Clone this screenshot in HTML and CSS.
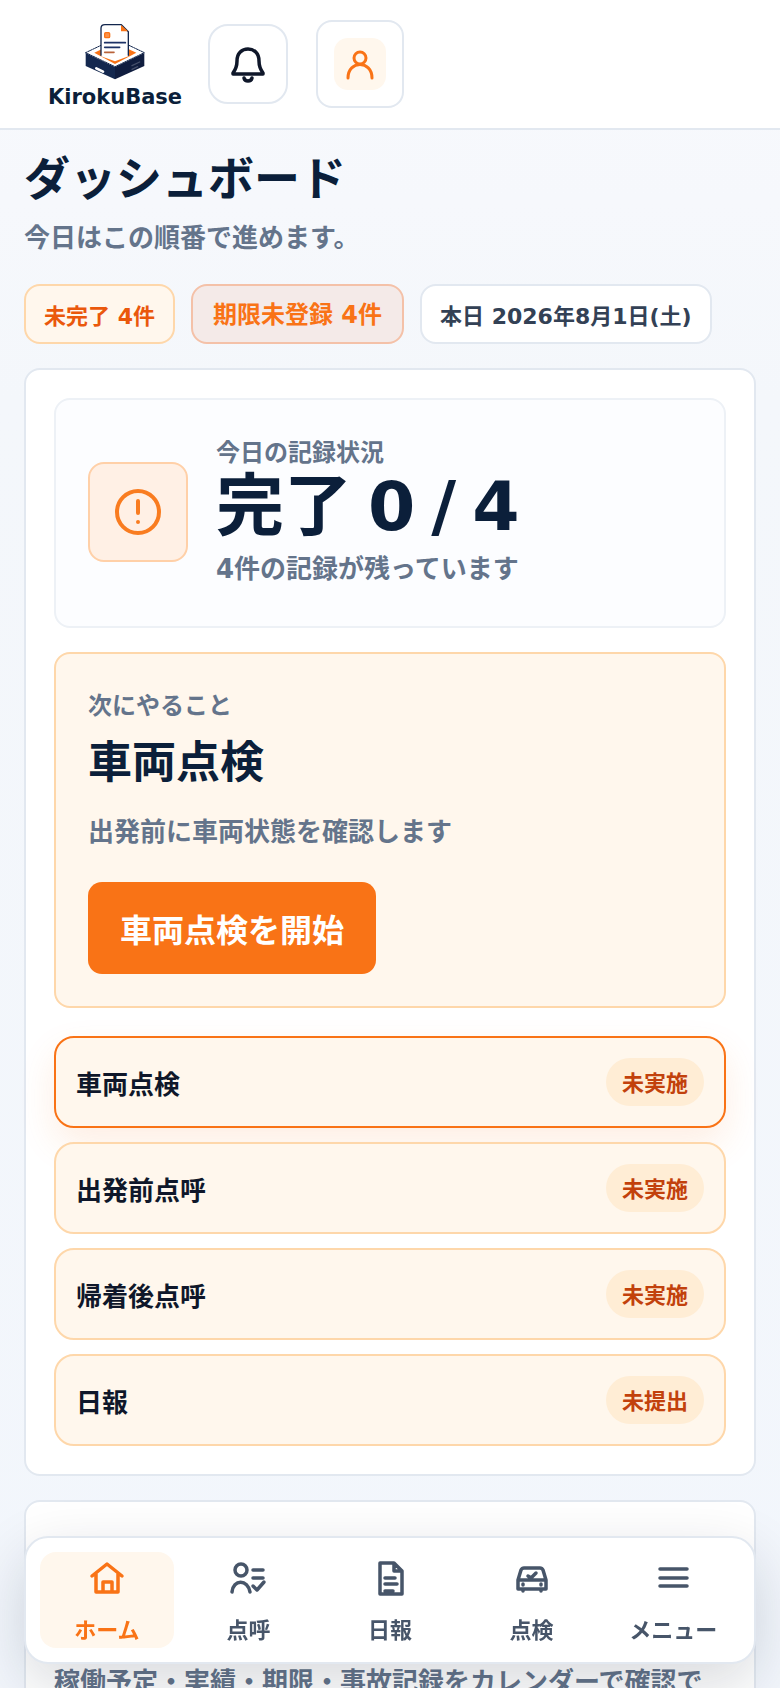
FILE: index.html
```
<!DOCTYPE html>
<html lang="ja">

<head>
    <meta charset="utf-8">
    <meta name="viewport" content="width=device-width, initial-scale=1.0">
    <title>KirokuBase</title>
    <link rel="stylesheet" href="styles.css">
</head>

<body>

<header class="topbar">
    <a class="brand" href="#">
        <svg class="brand-logo" viewBox="0 0 180 172" aria-hidden="true">
            <path d="M2 88 90 46 178 88 90 130Z" fill="#fff" stroke="#12264d" stroke-width="3" stroke-dasharray="5 3"/>
            <path d="M28 88 90 58 154 88 90 122Z" fill="#f97316"/>
            <path d="M2 89 90 131V168L2 128Z" fill="#14284f"/>
            <path d="M178 89 90 131V168L178 128Z" fill="#101d3f"/>
            <path d="M48 99V15Q48 4 60 4H109L130 25V99L90 114Z" fill="#fff"/>
            <path d="M48 96V15Q48 4 60 4H109L130 25V96" fill="none" stroke="#12264d" stroke-width="4"/>
            <path d="M108 5 129 24H108Z" fill="#f97316"/>
            <rect x="59" y="28" width="15" height="15" rx="3" fill="#fb9148" stroke="#f97316" stroke-width="4"/>
            <path d="M59 58H121M59 72H104" stroke="#1d3266" stroke-width="5" stroke-linecap="round"/>
            <path d="M59 87H87" stroke="#b9633a" stroke-width="5" stroke-linecap="round"/>
            <path d="M34 135 54 145" stroke="#fff" stroke-width="8" stroke-linecap="round"/>
            <path d="M141 127 164 116M141 138 158 130" stroke="#46506b" stroke-width="4" stroke-linecap="round"/>
        </svg>
        <span>KirokuBase</span>
    </a>
    <button class="bell" type="button" aria-label="通知">
        <svg viewBox="0 0 40 40" aria-hidden="true">
            <path d="M5 29C8 25 9 22 9 17C9 9 14 5 20 5S31 9 31 17C31 22 32 25 35 29V30H5Z"/>
            <path d="M16 34C17 38 23 38 24 34"/>
        </svg>
    </button>
    <button class="profile" type="button" aria-label="アカウント">
        <span class="avatar">
            <svg viewBox="0 0 40 40" aria-hidden="true">
                <circle cx="20" cy="14" r="6"/>
                <path d="M8 34C8 16 32 16 32 34"/>
            </svg>
        </span>
    </button>
</header>

<main>
    <h1>ダッシュボード</h1>
    <p class="lead">今日はこの順番で進めます。</p>

    <div class="chips">
        <span class="chip chip-todo">未完了 4件</span>
        <a class="chip chip-limit" href="#">期限未登録 4件</a>
        <span class="chip">本日 2026年8月1日(土)</span>
    </div>

    <section class="card">
        <div class="status">
            <div class="status-icon">
                <svg viewBox="0 0 52 52" aria-hidden="true">
                    <circle cx="26" cy="26" r="21"/>
                    <path d="M26 15V27M26 36V36"/>
                </svg>
            </div>
            <div>
                <p class="label">今日の記録状況</p>
                <p class="count"><span>完了</span> <span>0</span> <span>/</span> <span>4</span></p>
                <p class="note">4件の記録が残っています</p>
            </div>
        </div>

        <div class="next">
            <p class="label">次にやること</p>
            <h2>車両点検</h2>
            <p class="note">出発前に車両状態を確認します</p>
            <button class="start" type="button">車両点検を開始</button>
        </div>

        <ul class="tasks">
            <li><a class="task current" href="#">車両点検<span class="state">未実施</span></a></li>
            <li><a class="task" href="#">出発前点呼<span class="state">未実施</span></a></li>
            <li><a class="task" href="#">帰着後点呼<span class="state">未実施</span></a></li>
            <li><a class="task" href="#">日報<span class="state">未提出</span></a></li>
        </ul>
    </section>

    <section class="card calendar">
        <p class="note">稼働予定・実績・期限・事故記録をカレンダーで確認で</p>
    </section>
</main>

<nav class="tabs">
    <a class="tab active" href="#">
        <svg viewBox="0 0 40 40" aria-hidden="true">
            <path d="M5 18 20 6 35 18M9 16V34H31V16M16 34V24H25V34"/>
        </svg>
        ホーム
    </a>
    <a class="tab" href="#">
        <svg viewBox="0 0 40 40" aria-hidden="true">
            <circle cx="13" cy="12" r="6"/>
            <path d="M4 34C5 21 20 21 22 34M25 12H35M25 20H35M25 28 29 32 36 24"/>
        </svg>
        点呼
    </a>
    <a class="tab" href="#">
        <svg viewBox="0 0 40 40" aria-hidden="true">
            <path d="M10 5H24L32 13V36H10ZM24 5V13H32M15 20H25M15 26H27M15 33H23"/>
        </svg>
        日報
    </a>
    <a class="tab" href="#">
        <svg viewBox="0 0 40 40" aria-hidden="true">
            <path d="M6 22 9 12Q10 10 12 10H28Q30 10 31 12L34 22V31H6ZM6 22H34M11 31V33M29 31V33M11 26V27M29 26V27M16 18 19 20 24 15"/>
        </svg>
        点検
    </a>
    <a class="tab" href="#">
        <svg viewBox="0 0 40 40" aria-hidden="true">
            <path d="M7 11H34M7 20H34M7 28H34"/>
        </svg>
        メニュー
    </a>
</nav>

</body>

</html>
```
FILE: styles.css
```
* {
    box-sizing: border-box;
}

body {
    margin: 0;
    min-height: 100vh;
    font-family: "DejaVu Sans", "Noto Sans CJK JP", sans-serif;
    font-weight: bold;
    color: #0b1f3a;
    background: linear-gradient(180deg, #f8f9fd 0, #f4f7fb 400px, #f2f6fc 100%);
}

h1, h2, p, ul {
    margin: 0;
    padding: 0;
}

a {
    color: inherit;
    text-decoration: none;
}

button {
    font: inherit;
    padding: 0;
    cursor: pointer;
}

svg {
    display: block;
    fill: none;
    stroke-linecap: round;
    stroke-linejoin: round;
}

/* header */

.topbar {
    display: flex;
    align-items: center;
    gap: 26px;
    height: 130px;
    padding: 0 48px;
    background: #fff;
    border-bottom: 2px solid #e2e8f0;
}

.brand {
    display: flex;
    flex-direction: column;
    align-items: center;
    gap: 4px;
    padding-top: 4px;
    font-size: 21px;
    line-height: 24px;
}

.brand-logo {
    width: 60px;
    height: 58px;
}

.bell, .profile {
    display: grid;
    place-items: center;
    background: #fff;
    border: 2px solid #e2e8f0;
}

.bell {
    width: 80px;
    height: 80px;
    border-radius: 20px;
}

.bell svg, .avatar svg {
    width: 40px;
    stroke: #0f172a;
    stroke-width: 3.5;
}

.profile {
    width: 88px;
    height: 88px;
    margin-left: 2px;
    border-radius: 16px;
}

.avatar {
    display: grid;
    place-items: center;
    width: 52px;
    height: 52px;
    border-radius: 14px;
    background: #fff7ed;
}

.avatar svg {
    stroke: #f97316;
    stroke-width: 3;
}

/* dashboard */

main {
    padding: 18px 24px 24px;
}

h1 {
    font-size: 46px;
    line-height: 62px;
}

.lead, .note {
    font-size: 26px;
    line-height: 36px;
    color: #64748b;
}

.lead {
    margin-top: 10px;
}

.label {
    font-size: 24px;
    line-height: 32px;
    color: #64748b;
}

.chips {
    display: flex;
    flex-wrap: wrap;
    gap: 16px;
    margin: 28px 0 24px;
}

.chip {
    display: flex;
    align-items: center;
    height: 60px;
    padding: 0 18px;
    font-size: 22px;
    color: #334155;
    background: #fff;
    border: 2px solid #e2e8f0;
    border-radius: 16px;
}

.chip-todo {
    color: #ea580c;
    background: #fff7ed;
    border-color: #fed7aa;
}

.chip-limit {
    padding: 0 20px 4px;
    font-size: 24px;
    color: #f97316;
    background: #f4eae8;
    border-color: #f4c1a8;
}

.card {
    padding: 28px;
    margin-bottom: 24px;
    background: #fff;
    border: 2px solid #e2e8f0;
    border-radius: 16px;
}

.status {
    display: flex;
    align-items: center;
    gap: 28px;
    min-height: 230px;
    padding: 30px 32px 32px;
    background: #fcfdff;
    border: 2px solid #edf1f6;
    border-radius: 16px;
}

.status .note {
    margin-top: 6px;
}

.status-icon {
    display: grid;
    place-items: center;
    width: 100px;
    height: 100px;
    background: #fff0e5;
    border: 2px solid #ffd0a8;
    border-radius: 16px;
}

.status-icon svg {
    width: 52px;
    stroke: #f97c20;
    stroke-width: 4;
}

.count {
    display: flex;
    gap: 16px;
    font-size: 68px;
    line-height: 76px;
}

.next {
    margin: 24px 0 28px;
    padding: 36px 32px 32px;
    background: #fff7ed;
    border: 2px solid #fed7aa;
    border-radius: 16px;
}

h2 {
    margin: 12px 0 22px;
    font-size: 44px;
    line-height: 58px;
}

.start {
    display: block;
    height: 92px;
    margin-top: 32px;
    padding: 0 32px;
    font-size: 32px;
    color: #fff;
    background: #f97316;
    border: none;
    border-radius: 14px;
}

.tasks {
    display: grid;
    gap: 14px;
    list-style: none;
}

.task {
    display: flex;
    align-items: center;
    justify-content: space-between;
    height: 92px;
    padding: 0 20px;
    font-size: 26px;
    color: #0f172a;
    background: #fff7ed;
    border: 2px solid #fed7aa;
    border-radius: 20px;
}

.current {
    border-color: #f97316;
    box-shadow: 0 16px 36px rgba(249, 115, 22, 0.12);
}

.state {
    padding: 4px 16px 0;
    font-size: 22px;
    line-height: 44px;
    color: #c2410c;
    background: #ffedd5;
    border-radius: 24px;
}

.calendar {
    padding-top: 162px;
}

/* bottom navigation */

.tabs {
    position: fixed;
    left: 24px;
    right: 24px;
    bottom: 24px;
    display: grid;
    grid-template-columns: repeat(5, 1fr);
    gap: 8px;
    padding: 14px;
    background: #fff;
    border: 2px solid #e2e8f0;
    border-radius: 24px;
    box-shadow: 0 20px 60px rgba(15, 23, 42, 0.16);
}

.tab {
    display: flex;
    flex-direction: column;
    align-items: center;
    gap: 17px;
    height: 96px;
    padding-top: 6px;
    font-size: 22px;
    line-height: 32px;
    color: #475569;
    border-radius: 16px;
}

.tab svg {
    width: 40px;
    stroke: currentColor;
    stroke-width: 3.5;
}

.active {
    color: #f97316;
    background: #fff7ed;
}
```
